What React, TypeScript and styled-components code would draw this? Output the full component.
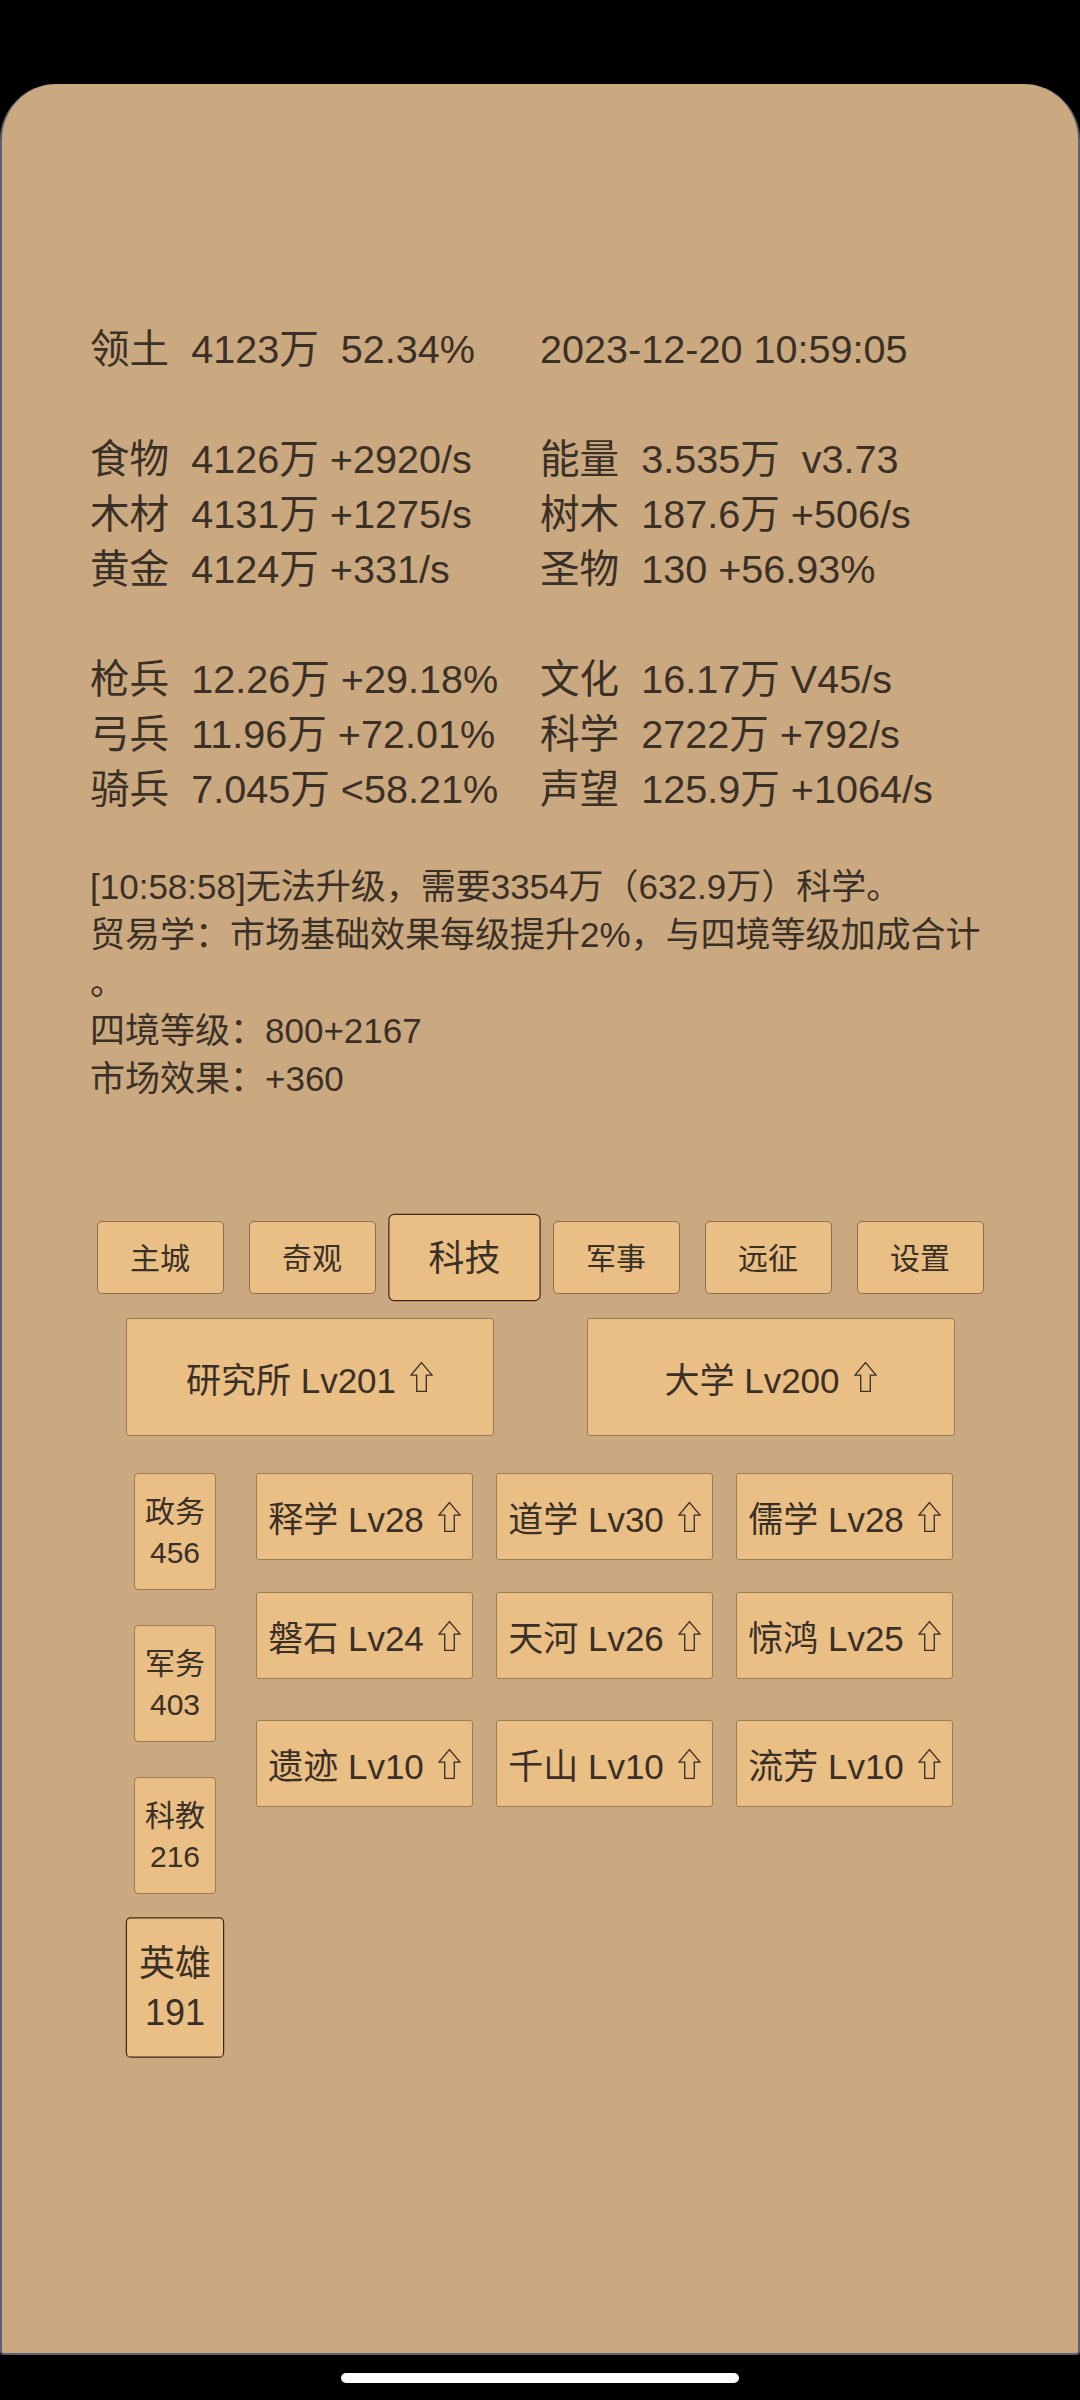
import styled, { createGlobalStyle } from 'styled-components'

const ink = '#3b3026'
const paper = '#caa981'
const button = '#e9bf85'

const GlobalStyle = createGlobalStyle`
    html, body {
        margin: 0;
        padding: 0;
        background: #000;
    }
    body {
        font-family: "Liberation Sans", "Noto Sans CJK SC", sans-serif;
        color: ${ink};
    }
`

const stats = [
    [['领土  4123万  52.34%', '2023-12-20 10:59:05']],
    [
        ['食物  4126万 +2920/s', '能量  3.535万  v3.73'],
        ['木材  4131万 +1275/s', '树木  187.6万 +506/s'],
        ['黄金  4124万 +331/s', '圣物  130 +56.93%'],
    ],
    [
        ['枪兵  12.26万 +29.18%', '文化  16.17万 V45/s'],
        ['弓兵  11.96万 +72.01%', '科学  2722万 +792/s'],
        ['骑兵  7.045万 <58.21%', '声望  125.9万 +1064/s'],
    ],
]

const messages = [
    '[10:58:58]无法升级，需要3354万（632.9万）科学。',
    '贸易学：市场基础效果每级提升2%，与四境等级加成合计。',
    '四境等级：800+2167',
    '市场效果：+360',
]

const tabs = ['主城', '奇观', '科技', '军事', '远征', '设置']

const sideItems = [
    { name: '政务', count: 456 },
    { name: '军务', count: 403 },
    { name: '科教', count: 216 },
    { name: '英雄', count: 191, active: true },
]

const techRows = [
    [['释学', 28], ['道学', 30], ['儒学', 28]],
    [['磐石', 24], ['天河', 26], ['惊鸿', 25]],
    [['遗迹', 10], ['千山', 10], ['流芳', 10]],
] as const

function UpArrow() {
    return (
        <ArrowIcon viewBox="0 0 24 32" width="23" height="32">
            <path d="M12 1 L23 14 H17 V31 H7 V14 H1 Z" fill="none" stroke={ink} strokeWidth="1.4" strokeLinejoin="miter" />
        </ArrowIcon>
    )
}

export default function App() {
    return (
        <Screen>
            <GlobalStyle />
            <Card>
                {stats.map((group, gi) => (
                    <StatGrid key={gi}>
                        {group.map((row) =>
                            row.map((cell) => <Stat key={cell}>{cell}</Stat>)
                        )}
                    </StatGrid>
                ))}

                <Messages>
                    {messages.map((line) => (
                        <p key={line}>{line}</p>
                    ))}
                </Messages>

                <TabBar>
                    {tabs.map((tab) => (
                        <Tab key={tab} $active={tab === '科技'}>{tab}</Tab>
                    ))}
                </TabBar>

                <BuildingRow>
                    <BigButton>研究所 Lv201<UpArrow /></BigButton>
                    <BigButton>大学 Lv200<UpArrow /></BigButton>
                </BuildingRow>

                <TechArea>
                    <SideColumn>
                        {sideItems.map((item) => (
                            <SideBox key={item.name} $active={item.active}>
                                <span>{item.name}</span>
                                <span>{item.count}</span>
                            </SideBox>
                        ))}
                    </SideColumn>
                    <TechGrid>
                        {techRows.map((row, ri) => (
                            <TechRow key={ri} $extra={ri === 2}>
                                {row.map(([name, lv]) => (
                                    <TechButton key={name}>{name} Lv{lv}<UpArrow /></TechButton>
                                ))}
                            </TechRow>
                        ))}
                    </TechGrid>
                </TechArea>
            </Card>
            <NavArea>
                <HomeBar />
            </NavArea>
        </Screen>
    )
}

const Screen = styled.div`
    width: 1080px;
    height: 2400px;
    box-sizing: border-box;
    padding-top: 84px;
    background: #000;
    display: flex;
    flex-direction: column;
`

const Card = styled.main`
    height: 2271px;
    box-sizing: border-box;
    padding: 238px 88px 0;
    background: ${paper};
    border-radius: 56px 56px 4px 4px;
    border-left: 2px solid #5f6170;
    border-right: 2px solid #5f6170;
    border-bottom: 2px solid #5f6170;
    display: flex;
    flex-direction: column;
`

const StatGrid = styled.div`
    display: grid;
    grid-template-columns: 450px 450px;
    font-size: 39.6px;
    line-height: 55px;
    white-space: pre;
    & + & {
        margin-top: 55px;
    }
`

const Stat = styled.div`
    color: ${ink};
`

const Messages = styled.div`
    margin-top: 46px;
    width: 900px;
    font-size: 35px;
    line-height: 48px;
    line-break: anywhere;

    p {
        margin: 0;
    }
`

const TabBar = styled.nav`
    margin-top: 118px;
    display: flex;
    justify-content: center;
    gap: 25px;
`

const Tab = styled.button<{ $active?: boolean }>`
    width: 127px;
    height: 73px;
    box-sizing: border-box;
    padding: 0 0 3px;
    background: ${button};
    border: 1px solid ${({ $active }) => ($active ? '#3a2818' : '#8f6f4b')};
    border-radius: 5px;
    font-family: inherit;
    font-size: 30px;
    color: ${ink};
    transform: ${({ $active }) => ($active ? 'scale(1.2)' : 'none')};
`

const BuildingRow = styled.div`
    margin-top: 24px;
    display: flex;
    justify-content: center;
    gap: 93px;
`

const BigButton = styled.button`
    width: 368px;
    height: 118px;
    box-sizing: border-box;
    padding: 0;
    background: ${button};
    border: 1px solid #9d7d57;
    border-radius: 3px;
    display: flex;
    align-items: center;
    justify-content: center;
    font-family: inherit;
    font-size: 35px;
    color: ${ink};
`

const ArrowIcon = styled.svg`
    margin-left: 14px;
    flex-shrink: 0;
`

const TechArea = styled.section`
    margin-top: 37px;
    padding-left: 44px;
    display: flex;
    gap: 40px;
`

const SideColumn = styled.div`
    width: 82px;
    display: flex;
    flex-direction: column;
    gap: 35px;
`

const SideBox = styled.div<{ $active?: boolean }>`
    height: 117px;
    box-sizing: border-box;
    background: ${button};
    border: 1px solid ${({ $active }) => ($active ? '#3a2818' : '#9d7d57')};
    border-radius: 4px;
    display: flex;
    flex-direction: column;
    align-items: center;
    justify-content: center;
    font-size: 30px;
    line-height: 41px;
    transform: ${({ $active }) => ($active ? 'scale(1.2)' : 'none')};
`

const TechGrid = styled.div`
    display: flex;
    flex-direction: column;
`

const TechRow = styled.div<{ $extra?: boolean }>`
    display: flex;
    gap: 23px;
    margin-top: ${({ $extra }) => ($extra ? '41px' : '32px')};
    &:first-child {
        margin-top: 0;
    }
`

const TechButton = styled.button`
    width: 217px;
    height: 87px;
    box-sizing: border-box;
    padding: 0;
    background: ${button};
    border: 1px solid #9d7d57;
    border-radius: 3px;
    display: flex;
    align-items: center;
    justify-content: center;
    font-family: inherit;
    font-size: 35px;
    color: ${ink};
    white-space: nowrap;
`

const NavArea = styled.div`
    flex: 1;
    display: flex;
    justify-content: center;
    padding-top: 18px;
`

const HomeBar = styled.div`
    width: 398px;
    height: 10px;
    border-radius: 5px;
    background: #fff;
`
